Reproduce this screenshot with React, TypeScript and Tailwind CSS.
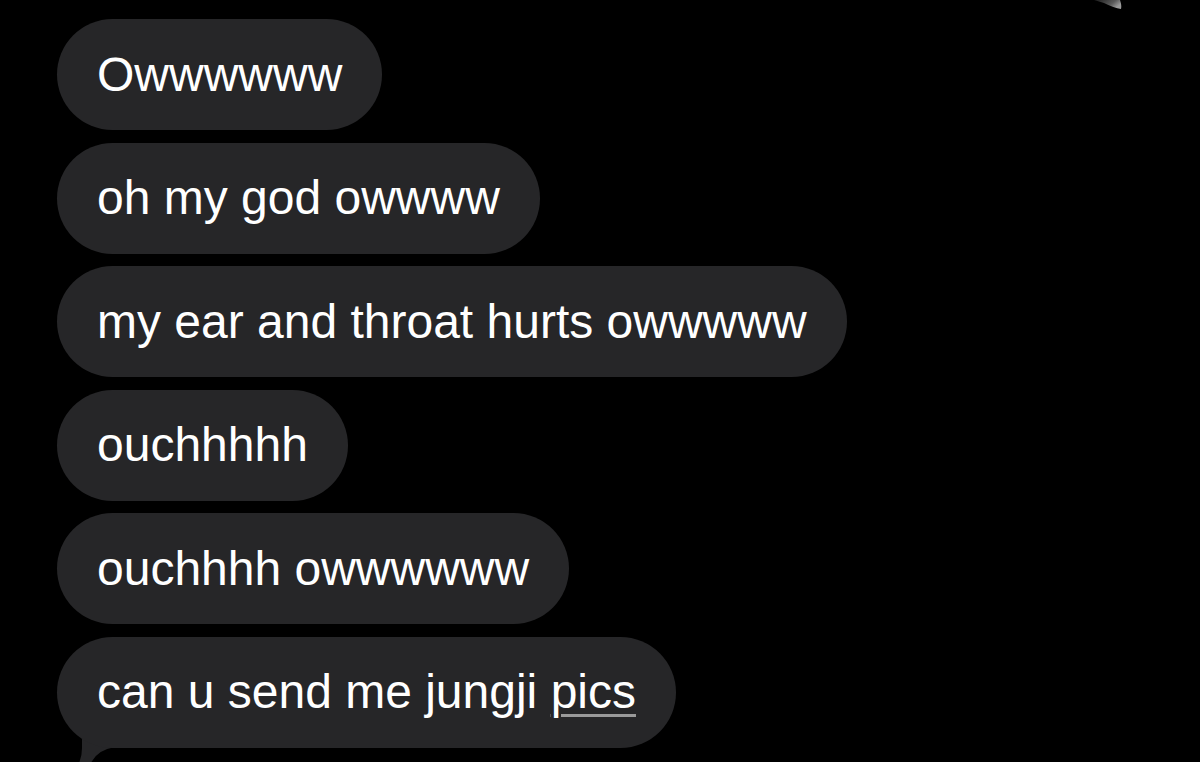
import React from 'react';

const messages = [
  'Owwwwww',
  'oh my god owwww',
  'my ear and throat hurts owwwww',
  'ouchhhhh',
  'ouchhhh owwwwww',
];

const Bubble: React.FC<{ children: React.ReactNode; tail?: boolean }> = ({ children, tail }) => (
  <div className="relative self-start">
    <div className="relative z-10 flex h-[111px] items-center rounded-full bg-[#262628] px-[40px] text-[48px] leading-none text-white whitespace-nowrap">
      <span>{children}</span>
    </div>
    {tail && (
      // tail of the last received bubble, hangs off the bottom left
      <svg className="absolute left-[10px] top-[63px]" width="50" height="70" viewBox="0 0 50 70">
        <path d="M15 30 L15 48 Q15 58 11 65 L23 65 Q29 50 48 47 L48 30 Z" fill="#262628" />
      </svg>
    )}
  </div>
);

const App: React.FC = () => {
  return (
    <div
      className="relative h-[762px] w-[1200px] overflow-hidden bg-black"
      style={{ fontFamily: '"Liberation Sans", Arial, sans-serif' }}
    >
      {/* bit of a sent bubble peeking in at the top */}
      <svg className="absolute left-[1094px] top-0" width="30" height="12" viewBox="0 0 30 12">
        <defs>
          <linearGradient id="peek" x1="0" y1="0" x2="1" y2="0.4">
            <stop offset="0" stopColor="#1a1a1a" />
            <stop offset="0.7" stopColor="#5a5a5a" />
            <stop offset="1" stopColor="#9a9a9a" />
          </linearGradient>
        </defs>
        <path d="M0 0 H26 Q28 6 27 9 Q20 8 10 3 Z" fill="url(#peek)" />
      </svg>

      <div className="flex flex-col gap-[12.6px] pl-[57px] pt-[19px]">
        {messages.map((m) => (
          <Bubble key={m}>{m}</Bubble>
        ))}
        <Bubble tail>
          can u send me jungji{' '}
          <span className="underline decoration-[#9a9a9a] decoration-3 underline-offset-[6px]">pics</span>
        </Bubble>
      </div>
    </div>
  );
};

export default App;
